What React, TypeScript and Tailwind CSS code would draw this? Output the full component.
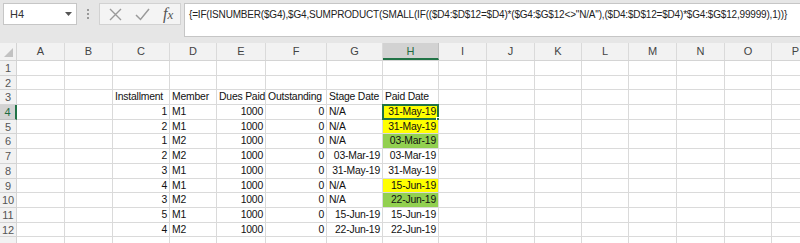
import React from 'react';

const colWidths = [
  'w-[17px]', 'w-[48px]', 'w-[48px]', 'w-[57px]', 'w-[47px]', 'w-[49px]', 'w-[61px]', 'w-[56px]', 'w-[56px]',
  'w-[48px]', 'w-[48px]', 'w-[47px]', 'w-[47px]', 'w-[48px]', 'w-[48px]', 'w-[47px]', 'w-[48px]',
];
const letters = ['A', 'B', 'C', 'D', 'E', 'F', 'G', 'H', 'I', 'J', 'K', 'L', 'M', 'N', 'O', 'P'];

type Cell = { v: string; right?: boolean; fill?: string };

const data: Record<number, Cell[]> = {
  3: [{ v: '' }, { v: '' }, { v: 'Installment' }, { v: 'Member' }, { v: 'Dues Paid' }, { v: 'Outstanding' }, { v: 'Stage Date' }, { v: 'Paid Date' }],
  4: [{ v: '' }, { v: '' }, { v: '1', right: true }, { v: 'M1' }, { v: '1000', right: true }, { v: '0', right: true }, { v: 'N/A' }, { v: '31-May-19', right: true, fill: 'bg-[#ffff00]' }],
  5: [{ v: '' }, { v: '' }, { v: '2', right: true }, { v: 'M1' }, { v: '1000', right: true }, { v: '0', right: true }, { v: 'N/A' }, { v: '31-May-19', right: true, fill: 'bg-[#ffff00]' }],
  6: [{ v: '' }, { v: '' }, { v: '1', right: true }, { v: 'M2' }, { v: '1000', right: true }, { v: '0', right: true }, { v: 'N/A' }, { v: '03-Mar-19', right: true, fill: 'bg-[#92d050]' }],
  7: [{ v: '' }, { v: '' }, { v: '2', right: true }, { v: 'M2' }, { v: '1000', right: true }, { v: '0', right: true }, { v: '03-Mar-19', right: true }, { v: '03-Mar-19', right: true }],
  8: [{ v: '' }, { v: '' }, { v: '3', right: true }, { v: 'M1' }, { v: '1000', right: true }, { v: '0', right: true }, { v: '31-May-19', right: true }, { v: '31-May-19', right: true }],
  9: [{ v: '' }, { v: '' }, { v: '4', right: true }, { v: 'M1' }, { v: '1000', right: true }, { v: '0', right: true }, { v: 'N/A' }, { v: '15-Jun-19', right: true, fill: 'bg-[#ffff00]' }],
  10: [{ v: '' }, { v: '' }, { v: '3', right: true }, { v: 'M2' }, { v: '1000', right: true }, { v: '0', right: true }, { v: 'N/A' }, { v: '22-Jun-19', right: true, fill: 'bg-[#92d050]' }],
  11: [{ v: '' }, { v: '' }, { v: '5', right: true }, { v: 'M1' }, { v: '1000', right: true }, { v: '0', right: true }, { v: '15-Jun-19', right: true }, { v: '15-Jun-19', right: true }],
  12: [{ v: '' }, { v: '' }, { v: '4', right: true }, { v: 'M2' }, { v: '1000', right: true }, { v: '0', right: true }, { v: '22-Jun-19', right: true }, { v: '22-Jun-19', right: true }],
};

const formula = '{=IF(ISNUMBER($G4),$G4,SUMPRODUCT(SMALL(IF(($D4:$D$12=$D4)*($G4:$G$12<>"N/A"),($D4:$D$12=$D4)*$G4:$G$12,99999),1))}';

function Toolbar() {
  return (
    <div className="flex h-[43px] shrink-0 items-start bg-[#e6e6e6] pt-[3px]">
      <div className="ml-[3px] flex h-[22px] w-[74px] shrink-0 items-center justify-between border border-[#c6c6c6] bg-white pl-[6px] pr-[4px] text-[11px] text-[#333]">
        <span>H4</span>
        <svg width="7" height="4" viewBox="0 0 7 4"><path d="M0 0h7L3.5 4z" fill="#555" /></svg>
      </div>
      <div className="ml-[10px] mt-[6px] flex h-[10px] shrink-0 flex-col justify-between">
        <span className="block h-[2px] w-[2px] bg-[#999]" />
        <span className="block h-[2px] w-[2px] bg-[#999]" />
        <span className="block h-[2px] w-[2px] bg-[#999]" />
      </div>
      <div className="ml-[10px] flex h-[22px] w-[82px] shrink-0 items-center gap-[13px] border border-[#d2d2d2] bg-[#f4f4f4] pl-[9px]">
        <svg width="13" height="13" viewBox="0 0 13 13"><path d="M1 1l11 11M12 1L1 12" stroke="#9a9a9a" strokeWidth="1.4" /></svg>
        <svg width="15" height="13" viewBox="0 0 15 13"><path d="M1 7l4.5 4.5L14 1" stroke="#9a9a9a" strokeWidth="1.5" fill="none" /></svg>
        <span className="font-['Liberation_Serif',serif] text-[16px] italic leading-none text-[#555]">
          f<span className="text-[13px]">x</span>
        </span>
      </div>
      <div className="ml-[3px] h-[34px] min-w-0 flex-1 overflow-hidden border border-r-0 border-[#c6c6c6] bg-white pl-[4px] pt-[4px] text-[10px] leading-[14px] tracking-[-0.18px] whitespace-nowrap text-[#222]">
        {formula}
      </div>
    </div>
  );
}

function HeaderRow() {
  return (
    <div className="flex h-[18px] shrink-0 border-b border-[#d4d4d4] bg-[#f2f2f2]">
      <div className={`${colWidths[0]} relative shrink-0 border-r border-[#d4d4d4]`}>
        <svg className="absolute bottom-[3px] right-[3px]" width="9" height="9" viewBox="0 0 9 9"><path d="M9 0v9H0z" fill="#c2c2c2" /></svg>
      </div>
      {letters.map((l, i) => {
        const sel = l === 'H';
        return (
          <div
            key={l}
            className={`${colWidths[i + 1]} shrink-0 border-r text-center text-[11px] leading-[17px] ${sel ? 'border-b-2 border-r-[#c0c0c0] border-b-[#217346] bg-[#d2d2d2] text-[#1e6b40]' : 'border-[#dadada] text-[#444]'}`}
          >
            {l}
          </div>
        );
      })}
    </div>
  );
}

function Row({ n }: { n: number }) {
  const cells = data[n] || [];
  const sel = n === 4;
  const partial = n > 12;
  return (
    <div className="flex h-[14.7px] shrink-0">
      <div
        className={`${colWidths[0]} shrink-0 border-b text-center text-[11px] leading-[14px] ${sel ? 'border-r-2 border-b-[#c0c0c0] border-r-[#217346] bg-[#d2d2d2] text-[#1e6b40]' : 'border-r border-[#d4d4d4] bg-[#f2f2f2] text-[#555]'}`}
      >
        {partial ? '' : n}
      </div>
      {letters.map((l, i) => {
        const c = cells[i];
        const active = n === 4 && l === 'H';
        return (
          <div
            key={l}
            className={`${colWidths[i + 1]} relative shrink-0 overflow-visible whitespace-nowrap border-b border-r border-[#dadada] px-[2px] text-[10.4px] leading-[14px] tracking-[-0.2px] text-[#111] ${c?.right ? 'text-right' : 'text-left'} ${c?.fill ?? 'bg-white'}`}
          >
            {c?.v}
            {active && (
              <>
                <div className="pointer-events-none absolute -left-[1px] -top-[1px] bottom-[-1px] right-[-1px] border-2 border-[#217346]" />
                <div className="absolute -bottom-[3px] -right-[3px] h-[5px] w-[5px] border border-white bg-[#217346]" />
              </>
            )}
          </div>
        );
      })}
    </div>
  );
}

export default function App() {
  return (
    <div className="flex h-[243px] w-[800px] flex-col overflow-hidden bg-white font-['Liberation_Sans',Arial,sans-serif]">
      <Toolbar />
      <HeaderRow />
      {Array.from({ length: 13 }, (_, i) => (
        <Row key={i} n={i + 1} />
      ))}
    </div>
  );
}
